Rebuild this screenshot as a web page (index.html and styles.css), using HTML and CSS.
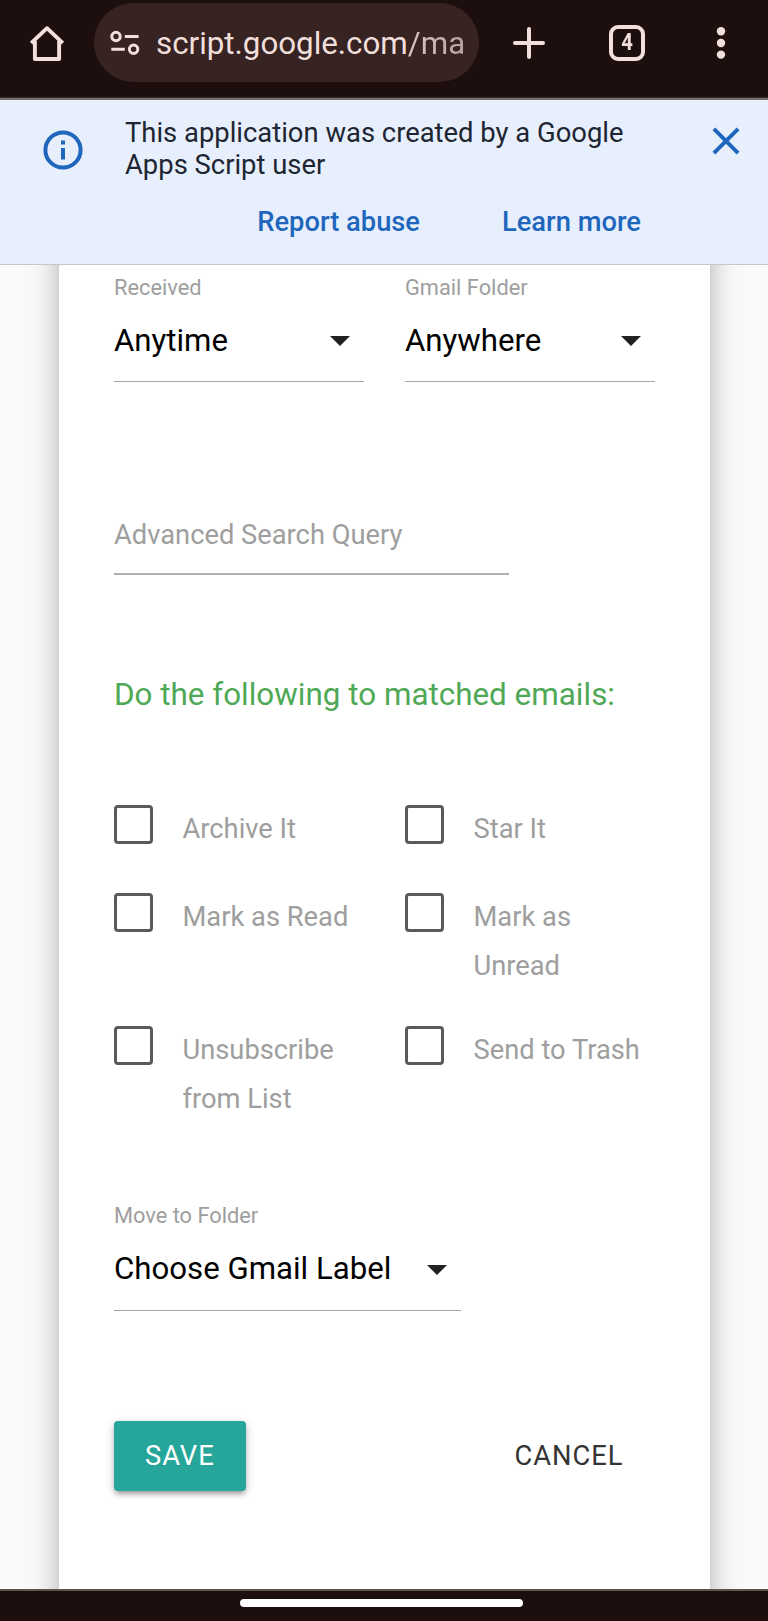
FILE: index.html
```html
<!DOCTYPE html>
<html lang="en">
<head>
<meta charset="utf-8">
<title>Apps Script application</title>
<link rel="stylesheet" href="styles.css">
</head>
<body>
<header class="browser-bar">
  <svg class="home" width="38" height="38" viewBox="0 0 38 38"><path d="M3.2 19.2 L19 4.2 L34.8 19.2 M6.900 17 V35 H31.100 V17" fill="none" stroke="#f1dfdc" stroke-width="3.900" stroke-linejoin="round"/></svg>
  <div class="address">
    <svg width="30" height="26" viewBox="0 0 30 26" fill="none" stroke="#f1dfdc" stroke-width="3"><circle cx="6" cy="6.500" r="4.200"/><path d="M14.800 6.500H28.600M1.300 19.200H14.800"/><circle cx="23.600" cy="19.200" r="4.200"/></svg>
    <div class="url">script.google.com<span class="path">/ma</span></div>
  </div>
  <svg class="plus" width="32" height="32" viewBox="0 0 32 32"><path d="M16 2V30M2 16H30" stroke="#f1dfdc" stroke-width="4" stroke-linecap="round"/></svg>
  <div class="tabs"><span>4</span></div>
  <svg class="more" width="10" height="34" viewBox="0 0 10 34" fill="#f1dfdc"><circle cx="5" cy="5.200" r="4.200"/><circle cx="5" cy="17" r="4.200"/><circle cx="5" cy="28.600" r="4.200"/></svg>
</header>
<section class="banner">
  <svg class="info" width="40" height="40" viewBox="0 0 40 40"><circle cx="20" cy="20" r="17.600" fill="none" stroke="#1f66bd" stroke-width="4"/><path d="M20 18V29.500M20 10.500V14.500" stroke="#1f66bd" stroke-width="4"/></svg>
  <div class="notice">
    <p>This application was created by a Google<br>Apps Script user</p>
    <nav><a>Report abuse</a><a>Learn more</a></nav>
  </div>
  <svg class="close" width="28" height="28" viewBox="0 0 28 28"><path d="M1.900 1.900L26.100 26.100M26.100 1.900L1.900 26.100" stroke="#1f66bd" stroke-width="4"/></svg>
</section>
<main class="page">
  <form class="card">
    <div class="row">
      <div class="field"><label>Received</label><div class="select">Anytime<i class="caret"></i></div></div>
      <div class="field"><label>Gmail Folder</label><div class="select">Anywhere<i class="caret"></i></div></div>
    </div>
    <div class="query">Advanced Search Query</div>
    <h2>Do the following to matched emails:</h2>
    <div class="options">
      <div class="option"><i class="box"></i><span>Archive It</span></div>
      <div class="option"><i class="box"></i><span>Star It</span></div>
      <div class="option"><i class="box"></i><span>Mark as Read</span></div>
      <div class="option"><i class="box"></i><span>Mark as<br>Unread</span></div>
      <div class="option last"><i class="box"></i><span>Unsubscribe<br>from List</span></div>
      <div class="option last"><i class="box"></i><span>Send to Trash</span></div>
    </div>
    <div class="field move"><label>Move to Folder</label><div class="select">Choose Gmail Label<i class="caret"></i></div></div>
    <div class="actions"><div class="save">SAVE</div><div class="cancel">CANCEL</div></div>
  </form>
</main>
<footer class="system-bar"><div class="handle"></div></footer>
</body>
</html>
```
FILE: styles.css
```css
* { box-sizing: border-box; }
body {
  margin: 0;
  width: 768px;
  height: 1621px;
  overflow: hidden;
  display: flex;
  flex-direction: column;
  font-family: Roboto, "Liberation Sans", sans-serif;
  background: #fafafa;
}
.browser-bar {
  height: 100px;
  flex: none;
  display: flex;
  align-items: flex-start;
  background: #1c0f0e;
  border-bottom: 2px solid #776e70;
  box-shadow: inset 0 -1px #352a2a;
  color: #f1dfdc;
}
.home { margin: 24px 0 0 28px; }
.address {
  width: 385px;
  height: 79px;
  margin: 3px 0 0 28px;
  padding-left: 16px;
  display: flex;
  align-items: center;
  border-radius: 40px;
  background: #372322;
}
.address svg { flex: none; }
.url {
  width: 307px;
  margin-left: 16px;
  overflow: hidden;
  white-space: nowrap;
  font-size: 31.300px;
  line-height: 44px;
  padding-top: 3px;
}
.path {
  color: transparent;
  background: linear-gradient(90deg, #d9c7c4, #b8a4a2);
  -webkit-background-clip: text;
  background-clip: text;
}
.plus { margin: 27px 0 0 34px; }
.tabs {
  width: 36px;
  height: 36px;
  margin: 25px 0 0 64px;
  border: 4px solid #f1dfdc;
  border-radius: 9px;
  font-size: 23px;
  font-weight: 700;
  line-height: 28px;
  text-align: center;
}
.tabs span { display: block; transform: scaleX(.88); }
.more { margin: 26px 0 0 71px; }
.banner {
  height: 165px;
  flex: none;
  display: flex;
  align-items: flex-start;
  background: #e7effd;
  border-bottom: 1.500px solid #c3c7cf;
  position: relative;
  z-index: 1;
}
.info { margin: 29.500px 0 0 42.500px; }
.notice { width: 520px; margin: 17px 0 0 42.500px; }
.notice p {
  margin: 0;
  font-size: 27.400px;
  line-height: 32px;
  color: #202532;
  white-space: nowrap;
}
.notice nav {
  display: flex;
  justify-content: flex-end;
  gap: 82px;
  margin-top: 25px;
  padding-right: 4px;
  font-size: 27.300px;
  line-height: 32px;
  font-weight: 500;
  color: #1f66bd;
}
.close { margin: 27px 0 0 67px; }
.page {
  flex: 1;
  min-height: 0;
  padding: 0 58px 0 59px;
  overflow: hidden;
}
.card {
  height: 1400px;
  margin-top: -40px;
  padding: 47.500px 55px 0;
  background: #fff;
  box-shadow: 0 16px 20px 2px rgba(0,0,0,.14), 0 6px 30px 5px rgba(0,0,0,.12), 0 8px 10px -7px rgba(0,0,0,.2);
}
.row { display: flex; gap: 41px; }
.field { width: 250px; }
.field label {
  display: block;
  font-size: 21.800px;
  line-height: 30px;
  color: #9e9e9e;
}
.select {
  height: 79.500px;
  display: flex;
  justify-content: space-between;
  font-size: 31.200px;
  line-height: 75px;
  color: #000;
  border-bottom: 1.500px solid #a5a5a5;
}
.caret {
  width: 0;
  margin: 33.500px 14px 0 0;
  align-self: flex-start;
  border: solid transparent;
  border-width: 10px 10px 0;
  border-top-color: #212121;
}
.query {
  width: 395px;
  height: 79px;
  margin-top: 114px;
  font-size: 27.300px;
  line-height: 79px;
  color: #9e9e9e;
  border-bottom: 2px solid #b0b0b0;
}
h2 {
  margin: 98px 0 0;
  font-size: 31.400px;
  font-weight: 400;
  line-height: 44px;
  color: #4fa856;
  white-space: nowrap;
}
.options {
  display: grid;
  grid-template-columns: 250px 250px;
  column-gap: 41px;
  row-gap: 39.500px;
  margin-top: 88px;
}
.option { display: flex; font-size: 27.300px; line-height: 48.800px; color: #9e9e9e; }
.option.last { margin-top: -4px; }
.option span { white-space: nowrap; }
.box {
  width: 39px;
  height: 39px;
  flex: none;
  margin: 0 29.500px 0 0;
  border: 3.500px solid #5a5a5a;
  border-radius: 4px;
}
.move { width: 347px; margin-top: 77.500px; }
.actions {
  display: flex;
  justify-content: space-between;
  margin-top: 110px;
  font-size: 27.300px;
  line-height: 70px;
  letter-spacing: 1px;
}
.save {
  width: 132px;
  height: 70px;
  padding-left: 31px;
  border-radius: 4px;
  color: #fff;
  background: #26a69a;
  box-shadow: 0 4px 4px rgba(0,0,0,.14), 0 6px 2px -4px rgba(0,0,0,.12), 0 2px 10px rgba(0,0,0,.2);
}
.cancel { margin-right: 31.500px; color: #343434; }
.system-bar {
  height: 32px;
  flex: none;
  background: #1c0f0e;
  border-top: 2px solid #5c5350;
}
.handle {
  width: 283px;
  height: 8px;
  margin: 8px 0 0 240px;
  border-radius: 4px;
  background: #fff;
}
```
